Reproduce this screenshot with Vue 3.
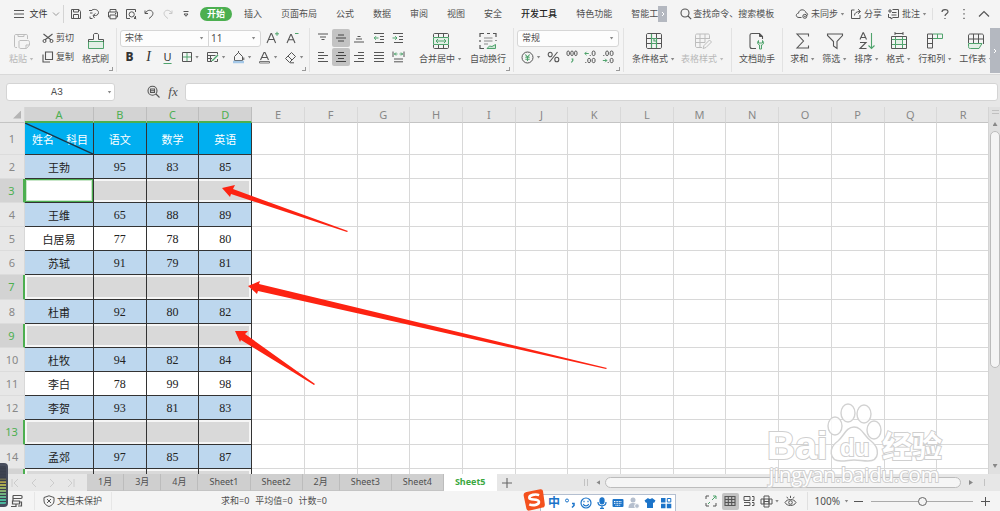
<script setup>
import { h, ref } from 'vue'

const D = '#555555'
const G = '#4fa36c'
const L = '#bdbdbd'

// Each glyph: [width, height, [path, stroke, fill, strokeWidth]...]
const glyphs = {
  menu: [12, 12, ['M1 2.5H11M1 6H11M1 9.5H11', D]],
  chevDown: [8, 6, ['M1 1.5L4 4.5L7 1.5', '#999']],
  chevUp: [12, 8, ['M1 6.5L6 1.5L11 6.5', D, 'none', 1.2]],
  chevRight: [4, 6, ['M1 1L3 3L1 5', '#fff']],
  save: [12, 12, ['M1.5 3V10.5H10.5V3.5L9 1.5H1.5V3M3.5 1.5V4H8.5V1.5M3.5 10.5V6.5H8.5V10.5', D]],
  export: [12, 12, ['M1 2.5H4M2 5H4.5M4 2C7 .5 10.5 2 10.5 4.5S8 8 5.5 7.5M7.5 5.5L5 7.5L6.5 10M2 8.5V10.5H4.5', D]],
  print: [12, 12, ['M3 4V1.5H9V4M3 9H1.5V4H10.5V9H9M3 7H9V10.8H3ZM8 5.5H9.2', D]],
  preview: [12, 12, ['M5 10.5H1.5V1.5H10.5V4M10.5 8V10.5H9M9.2 8.8L11.2 11.2', D], ['M9.3 6.4A2.6 2.6 0 1 1 4.1 6.4A2.6 2.6 0 1 1 9.3 6.4', D]],
  undo: [12, 12, ['M2 2.5V5.5H5M2.3 5.2C4 2 7.5 1.4 9.3 3.6C11 6 9 8.5 6 10.5', D]],
  redo: [12, 12, ['M10 2.5V5.5H7M9.7 5.2C8 2 4.5 1.4 2.7 3.6C1 6 3 8.5 6 10.5', '#c8c8c8']],
  more: [8, 8, ['M1.5 1.5H6.5', D], ['M2 4H6L4 6.3Z', D]],
  search: [12, 12, ['M9 5A4 4 0 1 1 1 5A4 4 0 1 1 9 5M8 8L11.2 11.2', D, 'none', 1.1]],
  cloud: [14, 12, ['M6.5 9.5H4C.5 9.5.5 5.5 3.5 5.2C4 .8 10 .8 10.8 4.6C12.5 5 13 6.5 12.3 7.5', D], ['M11.8 8.3A2 2 0 1 1 7.8 8.3A2 2 0 1 1 11.8 8.3M8.8 8.3H10.8', D]],
  share: [12, 12, ['M4.5 2H1.5V10.5H10V7M4.5 7.5C4.5 5 6.5 3.5 10 3.5M8 1.2L10.5 3.5L8 5.8', D]],
  comment: [13, 12, ['M5.5 1.5H11.5V9.5H6L4 11V9.5H1.5V6M3 1V5M1 3H5M5 4.5H9.5M4.5 7H9.5', D]],
  help: [10, 12, ['M2 4C2 .8 8 .8 8 3.8C8 5.8 5 5.8 5 8M5 10V11', D, 'none', 1.2]],
  dots: [4, 12, ['M2 1V2.3M2 5.3V6.6M2 9.7V11', D, 'none', 1.3]],
  paste: [18, 18, ['M4 15.5H3C1.8 15.5 1.5 15 1.5 14V4C1.5 3 2 2.5 3 2.5H13C14.2 2.5 14.5 3 14.5 4V7M5 2.5V4.5H11V2.5M6.5 8.5H14.5C16 8.5 16.5 9 16.5 10.5V13L13.5 16.5H8C6.8 16.5 6 16 6 15V9M13 16V13H16', L]],
  cut: [12, 12, ['M1.5 2L9.2 8M10.5 2L2.8 8', D, 'none', 1.1], ['M4 9A1.5 1.5 0 1 1 1 9A1.5 1.5 0 1 1 4 9M11 9A1.5 1.5 0 1 1 8 9A1.5 1.5 0 1 1 11 9', D]],
  copy: [12, 12, ['M3.5 1H10.5V8.5H3.5ZM1 3.5V11H8', D, 'none', 1.1]],
  brush: [18, 18, ['M1.5 9.5H16.5V16.5H1.5Z', G, '#e3efe6'], ['M1.5 10V7.5H6.5V2.5C6.5 1 11.5 1 11.5 2.5V7.5H16.5V10', D]],
  aPlus: [14, 14, ['M1 12L5 2.5H5.6L9.6 12M2.6 8.5H8', D, 'none', 1.1], ['M11 .8V4.8M9 2.8H13', G]],
  aMinus: [14, 14, ['M1 12L4.700 3.500H5.300L9 12M2.500 8.800H7.500', D, 'none', 1.1], ['M9 2.5H12.500', G]],
  border: [12, 12, ['M6 1V11M1 6H11', G], ['M1.5 1.5H10.5V10.5H1.5Z', D]],
  cellStyle: [13, 12, ['M6 10.5H1.5V1.5H11.5V3.500M1.5 4.5H9.500M1.5 7.5H6M4.5 4.5V10.5M11.500 8V10.500H8.500', D], ['M5.500 9.500C7 9.500 7.500 9 8 8L12 4', G, 'none', 1.3]],
  bucket: [13, 13, ['M2.5 5.5L6.5 1.5L10.5 5.5V9.5H2.5ZM4.5 3.5L6.5 1.5V0M11.8 6.5V9', D], ['M1 11H12', '#a4c8e8', 'none', 2.5]],
  fontColor: [13, 13, ['M2.5 9L6 1.5H7L10.5 9M3.8 6.5H9.2', D, 'none', 1.1], ['M1.5 10.5H11.5V12H1.5Z', '#777', '#fff', 1]],
  eraser: [13, 13, ['M1.500 7.500L7.500 1.500L11.500 5.500L5.500 11.500ZM4 5L8 9M6 11.800H10', D]],
  alTop: [12, 12, ['M1 2H11M3 5H9M4.5 7.5H7.5', D]],
  alMid: [12, 12, ['M3 3H9M1 6H11M3 9H9', '#444']],
  alBot: [12, 12, ['M4.5 4.5H7.5M3 7H9M1 10H11', D]],
  outdent: [12, 12, ['M1 1.5H11M7 4.5H11M7 7.5H11M2 10.5H11', D], ['M1.2 6H5.5M3 4.2L1.2 6L3 7.8', G]],
  indent: [12, 12, ['M1 1.5H11M7 4.5H11M7 7.5H11M2 10.5H11', D], ['M.5 6H5M3.2 4.2L5 6L3.2 7.8', G]],
  alLeft: [12, 12, ['M1 1.5H7M1 4.5H11M1 7.5H7M1 10.5H11', D]],
  alCenter: [12, 12, ['M3 1.5H9M1 4.5H11M3 7.5H9M1 10.5H11', '#444']],
  alRight: [12, 12, ['M5 1.5H11M1 4.5H11M5 7.5H11M1 10.5H11', D]],
  alJust: [12, 12, ['M1 1.5H11M1 4.5H11M1 7.5H11M1 10.5H11', D]],
  alDist: [13, 12, ['M1 .5V6M12 .5V6', D], ['M2 3H5.5M4 1.5L2.5 3L4 4.5M11 3H7.5M9 1.5L10.5 3L9 4.5', G], ['M2 8H11M2 10.8H11', D]],
  merge: [18, 18, ['M1.5 5.5H16.5V12.5H1.5Z', G, '#e3efe6'], ['M4 9H14M6 7L4 9L6 11M12 7L14 9L12 11', G], ['M1.5 5V2.5C1.5 2 2 1.5 2.5 1.5H15.5C16 1.5 16.5 2 16.5 2.5V5M1.5 13V15.5C1.5 16 2 16.5 2.5 16.5H15.5C16 16.5 16.5 16 16.5 15.5V13M6.5 1.5V5M11.5 1.5V5M6.5 13V16.5M11.5 13V16.5', D]],
  wrap: [18, 18, ['M1 5V1.5H5M8 1.5H11M14 1.5H17V5M1 8V10M17 8V9M1 13V16.5H5', D, 'none', 1.2], ['M5 6H13.5M5 9H13.5M5 12H9', '#888'], ['M8 16.5H16.5V12.5M8 16.5L10.5 14L13 14.5L16.5 12.5', G, '#cfe5d6']],
  yen: [13, 13, ['M12 6.5A5.5 5.5 0 1 1 1 6.5A5.5 5.5 0 1 1 12 6.5', D], ['M4.3 3.5L6.5 6L8.7 3.5M6.5 6V10M4.3 6.3H8.7M4.3 8.2H8.7', G, 'none', 1.1]],
  percent: [13, 12, ['M10.5 1L2.5 11', D, 'none', 1.1], ['M5.2 3.5A2 2.3 0 1 1 1.2 3.5A2 2.3 0 1 1 5.2 3.5M11.8 8.5A2 2.3 0 1 1 7.8 8.5A2 2.3 0 1 1 11.8 8.5', D, 'none', 1.1]],
  thousand: [12, 14, ['M1 2.2C1 .6 3.4 .6 3.4 2.2V4.3C3.4 6 1 6 1 4.3ZM4.8 2.2C4.8 .6 7.2 .6 7.2 2.2V4.3C7.2 6 4.8 6 4.8 4.3ZM8.6 2.2C8.6 .6 11 .6 11 2.2V4.3C11 6 8.6 6 8.6 4.3Z', D], ['M5.5 9H6.8V10.5L5.3 12.5', G, 'none', 1.2]],
  decInc: [12, 14, ['M8.2 2.2C8.2 .6 11 .6 11 2.2V4.3C11 6 8.2 6 8.2 4.3ZM6.2 5V6M3.8 9.5C3.8 8 6.4 8 6.4 9.5V11.5C6.4 13 3.8 13 3.8 11.5ZM8.2 9.5C8.2 8 11 8 11 9.5V11.5C11 13 8.2 13 8.2 11.5ZM1.8 12V13', D], ['M.8 3.5H4.8M2.5 1.8L.8 3.5L2.5 5.2', G]],
  decDec: [12, 14, ['M3.8 2.2C3.8 .6 6.4 .6 6.4 2.2V4.3C6.4 6 3.8 6 3.8 4.3ZM8.2 2.2C8.2 .6 11 .6 11 2.2V4.3C11 6 8.2 6 8.2 4.3ZM1.8 5V6M8.2 9.5C8.2 8 11 8 11 9.5V11.5C11 13 8.2 13 8.2 11.5ZM6.2 12V13', D], ['M.8 10.5H4.8M3.2 8.8L4.8 10.5L3.2 12.2', G]],
  cond: [18, 18, ['M1.500 6.500H6.500M11.500 2V6.500H16.500M1.500 11.500H6.500M11.500 11.500H16.500', D], ['M6.5 2V16M6.5 6.5H11.5V11.500H6.500M11.500 11.500V16M9 6.500V9H11', G, 'none', 1.2], ['M1.5 3C1.5 2 2 1.5 3 1.5H15C16 1.5 16.5 2 16.5 3V15C16.5 16 16 16.5 15 16.5H3C2 16.5 1.5 16 1.5 15Z', D]],
  tableStyle: [18, 18, ['M8 15.500H3C2 15.500 1.500 15 1.500 14V3.500C1.500 2.500 2 2 3 2H14C15 2 15.500 2.500 15.500 3.500V7M1.5 6.5H15.5M1.5 10.5H11M6 2V15.500M11 2V10.5M9 16.5L10 13.5L15.5 8L17.5 10L12 15.5Z', L]],
  assistant: [18, 18, ['M8 16.5H4C2.5 16.5 2 16 2 14.5V3C2 2 2.5 1.5 4 1.5H11.5L14.5 4.5V7', D, 'none', 1.1], ['M11.5 1.5V4.5H14.5Z', D, D], ['M10.5 8.5C8.5 11 10 12.5 11.5 13V17H13.5V13C15.5 12.5 16.5 11 14.5 8.5V11H10.5Z', G, '#e3efe6']],
  sigma: [18, 18, ['M14.5 4.5V2H3L9.5 9L3 16H14.5V13.5', D, 'none', 1.1]],
  filter: [18, 18, ['M1.5 2H16.5V3.5L11 9.5V16.5L7.5 14V9.5L1.5 3.5Z', D, 'none', 1.1]],
  sort: [18, 18, ['M2 7.5L5 .8H5.5L8.5 7.5M3 5.5H7.5M2 10.5H8L2 16.5H8.5', D, 'none', 1.1], ['M13.5 1V16.5M10.5 13.5L13.5 16.5L16.5 13.5', G, 'none', 1.1]],
  format: [18, 18, ['M2 7.5H16M2 12.5H16M5.5 4.5V16.5M12.5 4.5V16.5', G], ['M1.5 4.5H16.5V16.5H1.5ZM5 1.5H13M5 0V3M13 0V3', D], ['M5.5 7.5H12.5V12.5H5.5Z', G, '#e3efe6']],
  rowcol: [18, 18, ['M6.5 2H16.5V6.5H6.5M11.5 2V6.5', G], ['M6.5 2H1.5V16H6.5V2M1.5 6.5H6.5M1.5 11.5H6.5', D]],
  worksheet: [18, 18, ['M1.5 11V4C1.5 2.5 2 2 3.5 2H14.5C16 2 16.5 2.5 16.5 4V12M1.5 7H16.5M6.5 2V11M11.5 2V11', D], ['M1.5 11.5H15L12 16.5H3.5C2 16.5 1.5 16 1.5 14.5Z', G, '#e3efe6']],
  zoomFind: [14, 14, ['M10 5.7A4.5 4.5 0 1 1 1 5.7A4.5 4.5 0 1 1 10 5.7M9 9L12.5 12.5M3.5 4H7.5V7.5H3.5ZM3.5 5.7H7.5', D, 'none', 1.1]],
  first: [8, 10, ['M1 1V9M7 1L3 5L7 9', '#cccccc']],
  prev: [6, 10, ['M5 1L1 5L5 9', '#cccccc']],
  next: [6, 10, ['M1 1L5 5L1 9', '#cccccc']],
  last: [8, 10, ['M7 1V9M1 1L5 5L1 9', '#cccccc']],
  plus: [12, 12, ['M6 1V11M1 6H11', '#666', 'none', 1.1]],
  macro: [14, 14, ['M3 1.5H11C12.5 1.5 12.5 4.5 11 4.5H3V1.5M3 4.5V7M2.5 7H9.5V10H2.5ZM6 10V12.5H1M9.5 8H11.5V12H8', D, 'none', 1.2]],
  shield: [12, 12, ['M6 .8L11 2.5V6C11 9 8.5 10.5 6 11.5C3.5 10.5 1 9 1 6V2.5ZM4 4L8 8M8 4L4 8', D]],
  full: [12, 12, ['M1 4V1H4M1 8V11H4M11 8V11H8', D], ['M7 5L11 1M8 1H11V4M5 7L3 9', G]],
  gridView: [12, 12, ['M1 1.5H11V10.5H1ZM1 4.5H11M1 7.5H11M4.3 1.5V10.5M7.7 1.5V10.5', D, 'none', 1.1]],
  pageBreak: [12, 12, ['M1 1.500V5.500H7V1.500H1M9 1.500H11V5.500H9M1 7.500H7V10.500H1M9 7.500H11V10.500H9', D]],
  layout: [13, 13, ['M4 1H9V12H4ZM1 4H12V9H1ZM4 4V9M9 4V9M4 6.5H9', D]],
  eye: [13, 12, ['M1 7.5C3 3.5 10 3.5 12 7.5C10 11.5 3 11.5 1 7.5M8.3 7.5A1.8 1.8 0 1 1 4.7 7.5A1.8 1.8 0 1 1 8.3 7.5M6.5 .8V3M2.8 1.8L4 3.6M10.2 1.8L9 3.6', D]],
}

const Icon = ({ name }) => {
  const [w, ht, ...paths] = glyphs[name]
  return h('svg', { width: w, height: ht, viewBox: `0 0 ${w} ${ht}`, 'aria-hidden': 'true' },
    paths.map(([d, stroke, fill = 'none', sw = 1]) => h('path', { d, stroke, fill, 'stroke-width': sw })))
}
Icon.props = ['name']

const quick = [['save', '保存'], ['export', '输出'], ['print', '打印'], ['preview', '打印预览'], ['undo', '撤销'], ['redo', '恢复'], ['more', '更多']]
const tabs = ['插入', '页面布局', '公式', '数据', '审阅', '视图', '安全', '开发工具', '特色功能', '智能工']
const fillTools = [['border', '边框'], ['cellStyle', '单元格样式'], ['bucket', '填充颜色'], ['fontColor', '字体颜色'], ['eraser', '清除']]
const aligns = [
  ['alTop', '顶端对齐'], ['alMid', '垂直居中'], ['alBot', '底端对齐'], ['outdent', '减少缩进'], ['indent', '增加缩进'],
  ['alLeft', '左对齐'], ['alCenter', '水平居中'], ['alRight', '右对齐'], ['alJust', '两端对齐'], ['alDist', '分散对齐'],
]
const editTools = [['sigma', '求和'], ['filter', '筛选'], ['sort', '排序'], ['format', '格式'], ['rowcol', '行和列'], ['worksheet', '工作表']]

const columns = 'ABCDEFGHIJKLMNOPQR'.split('')
const rows = [
  ['姓名', '语文', '数学', '英语'],
  ['王勃', 95, 83, 85],
  null,
  ['王维', 65, 88, 89],
  ['白居易', 77, 78, 80],
  ['苏轼', 91, 79, 81],
  null,
  ['杜甫', 92, 80, 82],
  null,
  ['杜牧', 94, 82, 84],
  ['李白', 78, 99, 98],
  ['李贺', 93, 81, 83],
  null,
  ['孟郊', 97, 85, 87],
  null,
]
const plain = [4, 10]
const tall = [6, 12]
const rowClass = (r, i) => ({ title: i === 0, picked: !r, banded: r && i > 0 && !plain.includes(i), tall: tall.includes(i) })
const lastLabelled = 14

const sheets = ['1月', '3月', '4月', 'Sheet1', 'Sheet2', '2月', 'Sheet3', 'Sheet4', 'Sheet5']
const active = ref('Sheet5')
const cellName = ref('A3')
const formula = ref('')
const zoom = ref(50)
</script>

<template>
  <div class="app">
    <nav class="menubar">
      <button class="file"><Icon name="menu" /><span>文件</span><Icon name="chevDown" /></button>
      <div class="quick">
        <button v-for="[n, t] in quick" :key="n" :aria-label="t"><Icon :name="n" /></button>
      </div>
      <button class="start">开始</button>
      <div class="tabs">
        <button v-for="t in tabs" :key="t" :class="{ strong: t === '开发工具' }">{{ t }}</button>
      </div>
      <button class="tab-next" aria-label="更多选项卡"><Icon name="chevRight" /></button>
      <button class="find"><Icon name="search" />查找命令、搜索模板</button>
      <div class="account">
        <button><Icon name="cloud" />未同步<i class="caret"></i></button>
        <button><Icon name="share" />分享</button>
        <button><Icon name="comment" />批注<i class="caret"></i></button>
        <div class="window-tools">
          <button aria-label="帮助"><Icon name="help" /></button>
          <button aria-label="选项"><Icon name="dots" /></button>
          <button aria-label="收起功能区"><Icon name="chevUp" /></button>
        </div>
      </div>
    </nav>

    <div class="ribbon">
      <section class="group clip">
        <button class="big dim"><Icon name="paste" /><span>粘贴<i class="caret"></i></span></button>
        <div class="stack">
          <button class="line"><Icon name="cut" />剪切</button>
          <button class="line"><Icon name="copy" />复制</button>
        </div>
        <button class="big"><Icon name="brush" /><span>格式刷</span></button>
        <i class="corner"></i>
      </section>

      <section class="group fonts">
        <div class="stack">
          <div class="line">
            <div class="combo">
              <label class="pick family"><select aria-label="字体"><option>宋体</option></select><i class="caret"></i></label>
              <label class="pick size"><select aria-label="字号"><option>11</option></select><i class="caret"></i></label>
            </div>
            <button class="grow" aria-label="增大字号"><Icon name="aPlus" /></button>
            <button class="grow" aria-label="减小字号"><Icon name="aMinus" /></button>
          </div>
          <div class="line tight">
            <button class="glyph bold">B</button>
            <button class="glyph italic">I</button>
            <button class="glyph under">U</button>
            <button v-for="[n, t] in fillTools" :key="n" class="drop" :aria-label="t"><Icon :name="n" /><i class="caret"></i></button>
          </div>
        </div>
        <i class="corner"></i>
      </section>

      <section class="group align">
        <div class="align-grid">
          <button v-for="[n, t] in aligns" :key="n" :aria-label="t" :class="{ on: n === 'alMid' || n === 'alCenter' }"><Icon :name="n" /></button>
        </div>
        <button class="big merge"><Icon name="merge" /><span>合并居中<i class="caret"></i></span></button>
        <button class="big"><Icon name="wrap" /><span>自动换行</span></button>
        <i class="corner"></i>
      </section>

      <section class="group numbers">
        <div class="stack">
          <div class="line"><div class="combo wide"><label class="pick"><select aria-label="数字格式"><option>常规</option></select><i class="caret"></i></label></div></div>
          <div class="line num-tools">
            <button aria-label="货币" class="cur"><Icon name="yen" /><i class="caret"></i></button>
            <button aria-label="百分比"><Icon name="percent" /></button>
            <button aria-label="千位分隔"><Icon name="thousand" /></button>
            <button aria-label="增加小数位"><Icon name="decInc" /></button>
            <button aria-label="减少小数位"><Icon name="decDec" /></button>
          </div>
        </div>
        <i class="corner"></i>
      </section>

      <section class="group styles">
        <button class="big"><Icon name="cond" /><span>条件格式<i class="caret"></i></span></button>
        <button class="big dim"><Icon name="tableStyle" /><span>表格样式<i class="caret"></i></span></button>
      </section>
      <section class="group helper">
        <button class="big"><Icon name="assistant" /><span>文档助手</span></button>
      </section>
      <section class="group edit">
        <button v-for="[n, t] in editTools" :key="n" class="big"><Icon :name="n" /><span>{{ t }}<i class="caret"></i></span></button>
      </section>
      <button class="ribbon-next" aria-label="向右滚动"><Icon name="chevRight" /></button>
    </div>

    <div class="formula">
      <div class="namebox"><input v-model="cellName" aria-label="名称框"><i class="caret"></i></div>
      <button class="lookup" aria-label="浏览"><Icon name="zoomFind" /></button>
      <button class="fx">fx</button>
      <input v-model="formula" class="expr" aria-label="编辑栏">
    </div>

    <main class="sheet">
      <div class="canvas">
        <table>
          <colgroup><col class="c-head"><col class="c-first"><col v-for="c in 17" :key="c"></colgroup>
          <thead>
            <tr>
              <th class="all"><i></i></th>
              <th v-for="(c, i) in columns" :key="c" scope="col" :class="{ sel: i < 4 }">{{ c }}</th>
            </tr>
          </thead>
          <tbody>
            <tr v-for="(r, i) in rows" :key="i" :class="rowClass(r, i)">
              <th scope="row">{{ i < lastLabelled ? i + 1 : '' }}</th>
              <td v-for="(c, j) in columns" :key="c" :class="{ data: j < 4, num: i > 0 && j > 0, current: i === 2 && j === 0 }">
                <div v-if="i === 0 && j === 0" class="split">
                  <svg viewBox="0 0 100 100" preserveAspectRatio="none"><path d="M0 0L100 100" stroke="#17364a" stroke-width="1.4" vector-effect="non-scaling-stroke" /></svg>
                  <span>姓名</span><span>科目</span>
                </div>
                <template v-else-if="r && j < 4">{{ r[j] }}</template>
              </td>
            </tr>
          </tbody>
        </table>
        <svg class="arrows" width="640" height="300" viewBox="0 107 640 300" fill="#fd2312">
          <path d="M222 188L235 185L233 189L348 231L347 232L231 194L230 197Z" />
          <path d="M248 286L260 281L259 284L607 368L606 369L258 291L257 294Z" />
          <path d="M235 331L248 331L245 334L315 384L314 385L241 340L240 342Z" />
        </svg>
      </div>
      <div class="vscroll">
        <span class="grip"></span>
        <button class="tri up" aria-label="向上"></button>
        <span class="thumb"></span>
        <button class="tri down" aria-label="向下"></button>
      </div>
    </main>

    <div class="sheetbar">
      <div class="pager">
        <button aria-label="首个"><Icon name="first" /></button>
        <button aria-label="上一个"><Icon name="prev" /></button>
        <button aria-label="下一个"><Icon name="next" /></button>
        <button aria-label="末个"><Icon name="last" /></button>
      </div>
      <button v-for="s in sheets" :key="s" class="tab" :class="{ active: s === active }" @click="active = s">{{ s }}</button>
      <button class="add" aria-label="新建工作表"><Icon name="plus" /></button>
      <div class="hscroll">
        <span class="bars"></span>
        <button class="tri left" aria-label="向左"></button>
        <span class="thumb"></span>
        <button class="tri right" aria-label="向右"></button>
        <span class="bars one"></span>
      </div>
    </div>

    <footer class="status">
      <button class="macro" aria-label="宏"><Icon name="macro" /></button>
      <button class="protect"><Icon name="shield" />文档未保护</button>
      <div class="sums"><span>求和=0</span><span>平均值=0</span><span>计数=0</span></div>
      <div class="views">
        <button aria-label="全屏"><Icon name="full" /></button>
        <button class="on" aria-label="普通视图"><Icon name="gridView" /></button>
        <button aria-label="分页预览"><Icon name="pageBreak" /></button>
        <button class="lay" aria-label="阅读版式"><Icon name="layout" /><i class="caret"></i></button>
        <button aria-label="护眼模式"><Icon name="eye" /></button>
      </div>
      <div class="zoom">
        <button class="pct">100%<i class="caret"></i></button>
        <button class="step" aria-label="缩小"></button>
        <input v-model="zoom" type="range" min="0" max="100" aria-label="显示比例">
        <button class="step more" aria-label="放大"></button>
      </div>
    </footer>

    <div class="ime">
      <svg class="ime-logo" width="22" height="22" viewBox="0 0 22 22">
        <path d="M4 2.5L18 .8C19.5 .6 20.5 1.5 20.6 3L21.5 16C21.5 18 20.5 19 19 19.2L6 21.3C4 21.5 3 20.5 2.8 19L1 6C.8 4 2 2.8 4 2.5Z" fill="#f4511e" />
        <path d="M16.5 6.5C13 5 6.5 5.5 6.5 8.5C6.5 11.5 15.5 9.5 15.8 13C16 16.5 9.5 16.8 6 15" fill="none" stroke="#fff" stroke-width="2.6" />
      </svg>
      <div class="ime-bar">
        <b>中</b>
        <svg width="12" height="12" viewBox="0 0 12 12"><circle cx="3" cy="3.5" r="1.5" fill="none" stroke="#1c74c9" /><path d="M8 6.5H10V8.5L8 10.5" fill="none" stroke="#1c74c9" stroke-width="1.5" /></svg>
        <svg width="12" height="12" viewBox="0 0 12 12" fill="none" stroke="#1c74c9" stroke-width="1.2"><circle cx="6" cy="6" r="5" /><path d="M4 3.8V5.2M8 3.8V5.2M3.3 7C4.3 9.5 7.7 9.5 8.7 7" /></svg>
        <svg width="12" height="12" viewBox="0 0 12 12" fill="none" stroke="#1c74c9" stroke-width="1.2"><rect x="4" y=".8" width="4" height="6" rx="2" fill="#1c74c9" /><path d="M2 5C2 10 10 10 10 5M6 9V11.5M4 11.3H8" /></svg>
        <svg width="12" height="12" viewBox="0 0 12 12"><rect x=".5" y="2" width="11" height="8" rx="1" fill="#1c74c9" /><path d="M2 4.5H10M2 6.3H10M3.5 8.3H8.5" stroke="#fff" stroke-dasharray="1 .6" /></svg>
        <svg width="12" height="12" viewBox="0 0 12 12" fill="#b5bfce"><circle cx="5" cy="3" r="2.5" /><path d="M.5 11C.5 7 2.5 6 5 6S8 7 8 7V11Z" /><circle cx="9" cy="9" r="2.4" stroke="#fff" /></svg>
        <svg width="12" height="12" viewBox="0 0 12 12" fill="#1c74c9"><path d="M4 1C5 2.3 7 2.3 8 1L11.5 3.5L10 6L9 5.5V11H3V5.5L2 6L.5 3.5Z" /></svg>
        <svg width="12" height="12" viewBox="0 0 12 12" fill="#1c74c9"><path d="M1 1H5.5V5.5H1ZM1 6.8H5.5V11.3H1ZM6.8 6.8H11.3V11.3H6.8Z" /><path d="M7.3 1.5H10.8V5H7.3Z" fill="none" stroke="#1c74c9" /></svg>
      </div>
    </div>
    <div class="meter"></div>

    <svg class="watermark" width="190" height="96" viewBox="0 0 190 96">
      <g fill="#fff" fill-opacity=".85" stroke="#d2d2d2" stroke-width="1.4">
        <ellipse cx="69" cy="32" rx="7" ry="9" />
        <ellipse cx="82" cy="19" rx="7" ry="9" />
        <ellipse cx="98" cy="20" rx="7" ry="9" />
        <ellipse cx="108" cy="36" rx="7" ry="9" />
        <path d="M88 33C80 33 78 42 72 47C62 54 63 67 75 67C81 67 83 66 88 66S97 67 102 67C114 67 114 54 105 47C98 42 96 33 88 33Z" />
      </g>
      <g class="mark">
        <text x="1" y="65" class="latin">Bai</text>
        <text x="74" y="62" class="du">du</text>
        <text x="116" y="63" class="cjk">经验</text>
        <text x="3" y="88" class="site">jingyan.baidu.com</text>
      </g>
    </svg>
  </div>
</template>

<style>
html, body { margin: 0; overflow: hidden; }
</style>

<style scoped>
.app {
  position: relative; display: flex; flex-direction: column; height: 100vh; overflow: hidden;
  background: #f4f4f4; color: #505050;
  font: 9px/12px "Noto Sans", "Noto Sans CJK SC", sans-serif;
}
.app * { box-sizing: border-box; }
button { border: 0; padding: 0; margin: 0; background: none; font: inherit; color: inherit; display: flex; align-items: center; justify-content: center; white-space: nowrap; flex: none; }
svg { display: block; flex: none; }
input, select { font: inherit; color: inherit; border: 0; margin: 0; outline: 0; min-width: 0; }
.caret { flex: none; width: 5px; height: 3px; background: #888; clip-path: polygon(10% 0, 90% 0, 50% 100%); }

.menubar { display: flex; align-items: center; height: 28px; flex: none; }
.file { width: 64px; gap: 4px; padding-left: 10px; height: 18px; border-right: 1px solid #d4d4d4; }
.file > span { color: #333; }
.quick { display: flex; justify-content: space-between; width: 136px; padding: 0 8px 0 6px; }
.quick > button { width: 12px; }
.start { width: 32px; height: 14px; border-radius: 7px; background: #4caf50; color: #fff; font-weight: 700; }
.tabs { display: flex; gap: 19px; padding-left: 12px; }
.strong { color: #222; font-weight: 500; }
.tab-next { width: 9px; height: 16px; background: #b4b8c0; }
.find { gap: 1px; margin-left: 13px; }
.account { display: flex; gap: 5px; margin-left: auto; }
.account > button { gap: 2px; }
.window-tools { display: flex; align-items: center; gap: 12px; padding: 0 10px 0 7px; border-left: 1px solid #e0e0e0; }

.ribbon { display: flex; height: 47px; flex: none; overflow: hidden; border-bottom: 1px solid #d9d9d9; }
.group { position: relative; display: flex; align-items: flex-start; padding-top: 1px; flex: none; }
.group:not(.edit)::after { content: ""; position: absolute; right: 0; top: 0; width: 1px; height: 44px; background: #e2e2e2; }
.corner { position: absolute; right: 4px; bottom: 3px; width: 4px; height: 4px; border: solid #999; border-width: 0 1px 1px 0; }
.big { flex-direction: column; gap: 3px; padding-top: 3px; }
.big > span { display: flex; align-items: center; gap: 2px; }
.dim { color: #b8b8b8; }
.dim .caret { background: #bbb; }
.stack { display: flex; flex-direction: column; gap: 1px; }
.line { display: flex; align-items: center; height: 18px; gap: 2px; }
.tight { gap: 0; }
.clip { padding-left: 9px; padding-right: 8px; gap: 8px; }
.fonts { padding-left: 3px; padding-right: 3px; }
.align { padding-left: 4px; padding-right: 8px; gap: 8px; }
.numbers { padding-left: 3px; padding-right: 5px; }
.styles { padding-left: 8px; padding-right: 8px; gap: 6px; }
.helper { padding: 1px 8px 0 7px; }
.edit { flex: 1 1 0; min-width: 0; overflow: hidden; padding-left: 7px; gap: 7px; }
.ribbon-next { width: 10px; height: 45px; background: #b4b8c0; }
.combo { display: flex; width: 141px; height: 17px; border: 1px solid #d6d6d6; border-radius: 3px; background: #fdfdfd; }
.combo.wide { width: 102px; }
.pick { position: relative; display: flex; align-items: center; flex: 1; padding-right: 4px; }
.pick select { appearance: none; background: none; flex: 1; padding: 0 0 0 4px; height: 15px; }
.family { flex: 0 0 88px; border-right: 1px solid #d6d6d6; }
.family select { font-family: "Noto Sans CJK SC", sans-serif; }
.size select { padding-left: 2px; font-size: 10px; }
.grow { width: 16px; margin-left: 2px; }
.glyph { width: 19px; height: 18px; color: #333; font-size: 12px; }
.bold { font-weight: 800; }
.italic { font-family: "Liberation Serif", serif; font-style: italic; font-size: 14px; }
.under { text-decoration: underline #4fa36c; text-underline-offset: 2px; font-size: 11px; }
.drop { width: 26px; gap: 2px; }
.align-grid { display: grid; grid-template-columns: 18px 18px 18px 21px 18px; grid-auto-rows: 18px; row-gap: 1px; }
.on { background: #c3c3c3; border-radius: 2px; }
.merge { margin-left: 4px; }
.num-tools { gap: 6px; padding-left: 4px; }
.cur { gap: 2px; }

.formula { display: flex; align-items: center; height: 32px; flex: none; padding: 2px 2px 0 6px; background: #e7e7e7; }
.namebox { display: flex; align-items: center; width: 109px; height: 18px; padding-right: 2px; background: #fff; border: 1px solid #d4d4d4; border-radius: 3px; }
.namebox input { flex: 1; background: none; text-align: center; font: 10px "Liberation Mono", monospace; }
.lookup { margin-left: 32px; }
.fx { width: 24px; font: italic 13px/16px "Liberation Serif", serif; }
.expr { flex: 1; height: 18px; background: #fff; border: 1px solid #d4d4d4; border-radius: 3px; }

.sheet { display: flex; flex: 1; min-height: 0; background: #fff; }
.canvas { position: relative; flex: 1; min-width: 0; overflow: hidden; }
table { width: calc(100% + 2px); table-layout: fixed; border-collapse: separate; border-spacing: 0; }
.c-head { width: 25px; }
.c-first { width: 69px; }
th, td { padding: 0; text-align: center; height: 24px; border: solid #d8d8d8; border-width: 0 1px 1px 0; overflow: hidden; white-space: nowrap; }
th { background: #e7e7e7; color: #888; font: 11px/14px "Noto Sans", sans-serif; }
thead th { height: 16px; line-height: 13px; border-bottom-color: #c4c4c4; }
tbody th { border-bottom-color: #dcdcdc; }
.sel { background: #d3d3d3; color: #4caf50; border-bottom: 2px solid #4caf50; border-right-color: #bdbdbd; }
.all i { display: block; margin-left: 13px; width: 8px; height: 8px; background: #b4b4b4; clip-path: polygon(100% 0, 100% 100%, 0 100%); }
.title td, .title th { height: 32px; }
.tall td, .tall th { height: 25px; }
.data { border-color: #333; color: #222; font: 11px/14px "Noto Sans CJK SC", sans-serif; }
.num { font: 12px/14px "Liberation Serif", serif; }
.title .data { background: #00aff0; color: #fff; }
.banded .data { background: #bdd7ee; }
.picked th { background: #d3d3d3; color: #4caf50; border-right: 2px solid #4caf50; }
.picked .data { background: #d9d9d9; box-shadow: inset 0 2px #f6f6f6, inset 0 -2px #f6f6f6; }
.picked .data:nth-child(2) { box-shadow: inset 2px 2px #f6f6f6, inset 0 -2px #f6f6f6; }
.picked .data:nth-child(5) { box-shadow: inset -2px 2px #f6f6f6, inset 0 -2px #f6f6f6; }
.picked .data.current { background: #fff; box-shadow: inset 0 0 0 1px #4caf50, inset 0 0 0 2px #c9e6ca; }
.split { position: relative; display: flex; justify-content: space-between; padding: 0 5px 0 7px; height: 31px; align-items: center; }
.split svg { position: absolute; inset: 0; width: 100%; height: 100%; }
.arrows { position: absolute; left: 0; top: 0; pointer-events: none; }

.vscroll { display: flex; flex-direction: column; align-items: center; width: 12px; flex: none; background: #e0e0e0; border-left: 1px solid #d4d4d4; padding-left: 1px; }
.grip { width: 7px; height: 4px; margin-top: 3px; border: solid #c0c0c0; border-width: 1px 0; }
.tri { width: 5px; height: 4px; background: #888; }
.up { margin: 8px 0 5px; clip-path: polygon(50% 0, 100% 100%, 0 100%); }
.down { margin: auto 0 6px; clip-path: polygon(0 0, 100% 0, 50% 100%); }
.vscroll .thumb { width: 10px; height: 237px; border: 1px solid #bcbcbc; border-radius: 5px; background: #f5f5f5; }

.sheetbar { display: flex; height: 17px; flex: none; background: #e7e7e7; }
.pager { display: flex; align-items: center; gap: 12px; width: 87px; padding-left: 11px; }
.tab { padding: 0 11px; background: #cfcfcf; border-right: 1px solid #bcbcbc; border-bottom: 1px solid #c4c4c4; }
.active { background: #fff; color: #3ba83f; font-weight: 700; border-color: #fff; }
.add { width: 20px; }
.hscroll { display: flex; align-items: center; flex: 1; margin-left: 67px; padding-right: 15px; }
.bars { width: 4px; height: 7px; border: solid #c2c2c2; border-width: 0 1px; }
.bars.one { border-left: 0; }
.left { margin: 0 5px 0 8px; width: 4px; height: 5px; clip-path: polygon(100% 0, 100% 100%, 0 50%); }
.right { margin: 0 8px; width: 4px; height: 5px; clip-path: polygon(0 0, 100% 50%, 0 100%); }
.hscroll .thumb { flex: 1; height: 11px; border: 1px solid #bcbcbc; border-radius: 6px; background: #f5f5f5; }

.status { display: flex; align-items: center; height: 20px; flex: none; }
.macro { width: 35px; height: 18px; border-right: 1px solid #e6e6e6; }
.protect { gap: 2px; height: 18px; padding: 0 9px 0 8px; border-right: 1px solid #e6e6e6; }
.sums { display: flex; gap: 6px; margin-left: 109px; }
.views { display: flex; align-items: center; gap: 2px; margin-left: auto; padding-right: 8px; border-right: 1px solid #e0e0e0; height: 18px; }
.views > button { width: 17px; height: 17px; }
.views > .lay { width: 20px; gap: 2px; }
.zoom { display: flex; align-items: center; padding: 0 10px 0 7px; }
.pct { gap: 4px; font-size: 10px; margin-right: 5px; }
.step { width: 9px; height: 9px; background: linear-gradient(#555, #555) center / 9px 1px no-repeat; }
.more { background: linear-gradient(#555, #555) center / 9px 1px no-repeat, linear-gradient(#555, #555) center / 1px 9px no-repeat; }
.zoom input { appearance: none; width: 102px; height: 10px; margin: 0 8px; background: linear-gradient(#aaa, #aaa) center / 100% 1px no-repeat; }
.zoom input::-webkit-slider-thumb { appearance: none; width: 9px; height: 9px; border: 1px solid #666; border-radius: 50%; background: #f4f4f4; }

.ime { position: absolute; left: 523px; bottom: 0; display: flex; align-items: flex-end; }
.ime-logo { position: relative; z-index: 1; transform: rotate(-4deg); }
.ime-bar { display: flex; align-items: center; gap: 4px; height: 17px; margin-left: -5px; padding: 0 3px 0 7px; background: #fff; border: 1px solid #b4bfd0; border-bottom: 0; }
.ime-bar b { width: 12px; font-size: 12px; color: #1c74c9; }
.meter { position: absolute; left: 0; bottom: 4px; width: 8px; height: 44px; border: solid #474c5c; border-width: 3px 2px 3px 0; border-radius: 0 4px 4px 0; background: repeating-linear-gradient(transparent 0 2px, #3a3f4d 2px 3px), linear-gradient(#3d4250 30%, #b9a94a 45%, #49b59c 90%); }
.watermark { position: absolute; right: 44px; bottom: 21px; width: 190px; pointer-events: none; }
.mark text { fill: #fff; stroke: #cfcfcf; stroke-width: 2px; paint-order: stroke; }
.mark .latin { font: 700 39px "Liberation Sans", sans-serif; }
.mark .du { font: 700 24px "Liberation Sans", sans-serif; }
.mark .cjk { font: 700 30px "Noto Sans CJK SC", sans-serif; }
.mark .site { font: 20px "Open Sans", sans-serif; }
</style>
